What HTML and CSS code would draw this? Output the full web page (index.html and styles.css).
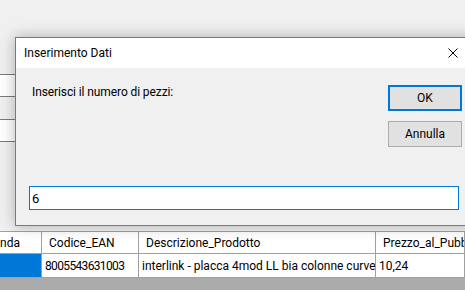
FILE: index.html
```html
<!DOCTYPE html>
<html lang="it">
<head>
<meta charset="utf-8">
<title>Inserimento Dati</title>
<link rel="stylesheet" href="styles.css">
</head>
<body>
<div class="app">
  <div class="fields">
    <div class="field"></div>
    <div class="field"></div>
  </div>
  <div class="grid">
    <div class="row head">
      <div class="cell">nda</div>
      <div class="cell">Codice_EAN</div>
      <div class="cell">Descrizione_Prodotto</div>
      <div class="cell">Prezzo_al_Pubblico</div>
    </div>
    <div class="row data">
      <div class="cell sel"></div>
      <div class="cell ean">8005543631003</div>
      <div class="cell">interlink - placca 4mod LL bia colonne curve</div>
      <div class="cell">10,24</div>
    </div>
  </div>
</div>

<div class="dialog">
  <div class="titlebar">
    <span class="title">Inserimento Dati</span>
    <svg class="close" width="10" height="10" viewBox="0 0 10 10">
      <path d="M0.5 0.5 L9.5 9.5 M9.5 0.5 L0.5 9.5" stroke="#000" stroke-width="1" fill="none"/>
    </svg>
  </div>
  <div class="dlg-body">
    <div class="top-row">
      <div class="prompt">Inserisci il numero di pezzi:</div>
      <div class="buttons">
        <button class="btn default">OK</button>
        <button class="btn">Annulla</button>
      </div>
    </div>
    <input class="entry" type="text" value="6">
  </div>
</div>
</body>
</html>
```

FILE: styles.css
```css
html, body {
  margin: 0;
  padding: 0;
  width: 465px;
  height: 290px;
  overflow: hidden;
}
body {
  background: #f0f0f0;
  font-family: Roboto, Lato, sans-serif;
  font-size: 12px;
  color: #000;
  position: relative;
}
.app {
  height: 290px;
  display: flex;
  flex-direction: column;
}
.fields {
  padding-top: 74px;
  display: flex;
  flex-direction: column;
  gap: 22px;
}
.field {
  width: 300px;
  height: 21px;
  background: #fff;
  border-top: 1px solid #7a7a7a;
  border-bottom: 1px solid #7a7a7a;
}
.grid {
  margin-top: 89px;
  flex: 1;
  background: #ababab;
}
.row {
  display: grid;
  grid-template-columns: 42px 97px 237px 1fr;
  background: #fff;
  border-bottom: 1px solid #a0a0a0;
}
.row.head {
  border-top: 1px solid #a0a0a0;
  height: 21px;
}
.row.data {
  height: 23px;
}
.cell {
  border-right: 1px solid #a0a0a0;
  white-space: nowrap;
  overflow: hidden;
  display: flex;
  align-items: center;
}
.head .cell { padding-left: 7px; }
.head .cell:first-child { padding-left: 0; }
.data .cell { padding-left: 3px; }
.cell.ean { letter-spacing: -0.65px; }
.cell.sel { background: #0078d7; padding-left: 0; }

.dialog {
  position: absolute;
  left: 15px;
  top: 37px;
  width: 462px;
  height: 189px;
  box-sizing: border-box;
  border: 1px solid #7a7a7a;
  background: #f0f0f0;
  box-shadow: 0 0 14px rgba(0, 0, 0, 0.28);
  display: flex;
  flex-direction: column;
}
.titlebar {
  height: 30px;
  background: #fff;
  display: flex;
  align-items: center;
  padding-left: 8px;
  padding-right: 18px;
  justify-content: space-between;
}
.close { display: block; }
.dlg-body {
  flex: 1;
  padding: 17px 14px 15px 13px;
  display: flex;
  flex-direction: column;
}
.top-row {
  display: flex;
  justify-content: space-between;
}
.prompt {
  padding-left: 3px;
  margin-top: -1px;
  line-height: 16px;
  letter-spacing: -0.1px;
}
.buttons {
  display: flex;
  flex-direction: column;
  gap: 10px;
}
.btn {
  width: 74px;
  height: 26px;
  box-sizing: border-box;
  background: #e1e1e1;
  border: 1px solid #adadad;
  font-family: inherit;
  font-size: 12px;
  color: #000;
  padding: 0;
  margin: 0;
}
.btn.default {
  border: 2px solid #0078d7;
}
.entry {
  margin-top: auto;
  width: 430px;
  height: 24px;
  box-sizing: border-box;
  border: 1px solid #0078d7;
  background: #fff;
  font-family: inherit;
  font-size: 13px;
  padding: 0 2px;
  outline: none;
  color: #000;
}
```
